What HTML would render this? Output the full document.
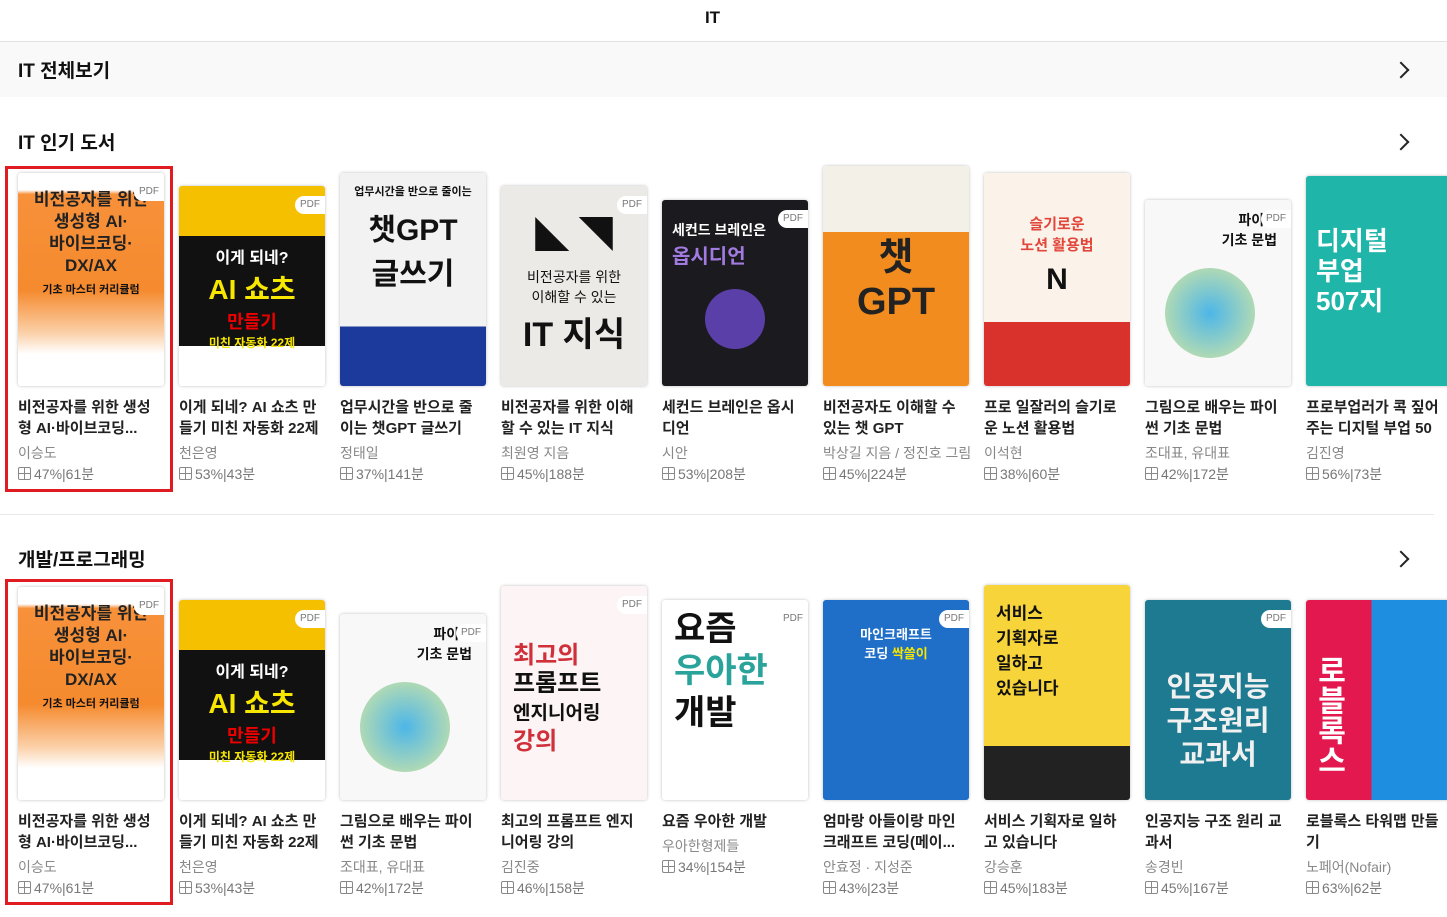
<!DOCTYPE html><html><head><meta charset="utf-8"><style>
body{margin:0;width:1447px;height:917px;overflow:hidden;background:#fff;font-family:"Liberation Sans","Noto Sans CJK KR",sans-serif;color:#111;position:relative}
.a{position:absolute}
.hd{top:0;left:0;width:1425px;height:41px;text-align:center;line-height:36px;font-size:17px;font-weight:bold}
.ln{top:41px;left:0;width:1447px;height:1px;background:#e2e2e2}
.band{top:42px;left:0;width:1447px;height:55px;background:#f9f9f9}
.h{font-size:19px;font-weight:bold;left:18px}
.chev{width:10px;height:10px;border-right:2px solid #222;border-top:2px solid #222;transform:rotate(45deg)}
.cv{width:146px;box-shadow:0 0 3px rgba(0,0,0,.25);border-radius:3px;overflow:hidden;font-weight:bold;text-align:center}
.pdf{position:absolute;right:0;top:10px;width:30px;height:18px;background:#fff;border-radius:9px 0 0 9px;font-size:10px;font-weight:normal;color:#777;line-height:18px}
.t{width:150px;font-size:15px;font-weight:bold;line-height:21px;color:#222;white-space:nowrap;overflow:hidden}
.au{font-size:14px;color:#888;width:155px;white-space:nowrap;overflow:hidden}
.st{font-size:14px;color:#777}
.st:before{content:"";display:inline-block;width:11px;height:11px;border:1px solid #888;border-radius:2px;margin-right:3px;vertical-align:-1px;background:linear-gradient(#888,#888) 5px 0/1px 100% no-repeat,linear-gradient(#888,#888) 0 5px/100% 1px no-repeat}
.red{border:3px solid #e01b22;left:5px;width:162px;height:320px}
</style></head><body>
<div class="a hd">IT</div>
<div class="a ln"></div>
<div class="a band"></div>
<div class="a h" style="top:56px">IT 전체보기</div>
<div class="a chev" style="left:1395px;top:64px"></div>
<div class="a h" style="top:128px">IT 인기 도서</div>
<div class="a chev" style="left:1395px;top:136px"></div>
<div class="a" style="left:0;top:514px;width:1434px;height:1px;background:#e8e8e8"></div>
<div class="a h" style="top:545px">개발/프로그래밍</div>
<div class="a chev" style="left:1395px;top:553px"></div>

<!-- row 1 -->
<div class="a cv" style="left:18px;top:173px;height:213px;background:linear-gradient(#fff 8%,#f7913a 10%,#f58a2e 55%,#fbd0a8 75%,#fff 85%)"><div style="font-size:17px;color:#222;margin-top:16px;line-height:22px">비전공자를 위한<br>생성형 AI·<br>바이브코딩·<br>DX/AX</div><div style="font-size:11px;margin-top:4px">기초 마스터 커리큘럼</div><div class="pdf">PDF</div></div>
<div class="a cv" style="left:179px;top:186px;height:200px;background:linear-gradient(#f5c000 0,#f5c000 25%,#111 25%,#111 80%,#fff 80%)"><div style="color:#fff;font-size:16px;margin-top:58px">이게 되네?</div><div style="color:#f7e600;font-size:28px">AI 쇼츠</div><div style="color:#e00;font-size:18px">만들기</div><div style="color:#f7e600;font-size:12px">미친 자동화 22제</div><div class="pdf">PDF</div></div>
<div class="a cv" style="left:340px;top:173px;height:213px;background:linear-gradient(#f2f2f2 72%,#1c3a9c 72%)"><div style="font-size:11px;margin-top:10px">업무시간을 반으로 줄이는</div><div style="font-size:30px;margin-top:6px">챗GPT</div><div style="font-size:30px">글쓰기</div></div>
<div class="a cv" style="left:501px;top:186px;height:200px;background:#eceae6"><div style="font-size:34px;margin-top:22px">◣ ◥</div><div style="font-size:14px;font-weight:normal;margin-top:10px">비전공자를 위한<br>이해할 수 있는</div><div style="font-size:34px">IT 지식</div><div class="pdf">PDF</div></div>
<div class="a cv" style="left:662px;top:200px;height:186px;background:#1a1a1f"><div style="color:#fff;font-size:14px;text-align:left;margin:20px 0 0 10px">세컨드 브레인은<br><span style="color:#a27be0;font-size:20px">옵시디언</span></div><div style="width:60px;height:60px;border-radius:30px;background:#5b3fa8;margin:20px auto"></div><div class="pdf">PDF</div></div>
<div class="a cv" style="left:823px;top:166px;height:220px;background:linear-gradient(#f3f0e8 30%,#f28c1e 30%)"><div style="font-size:38px;margin-top:60px;color:#222">챗<br>GPT</div></div>
<div class="a cv" style="left:984px;top:173px;height:213px;background:linear-gradient(#fbf2ea 70%,#d9322c 70%)"><div style="font-size:15px;color:#e2473b;margin-top:40px">슬기로운<br>노션 활용법</div><div style="font-size:30px;margin-top:8px">N</div></div>
<div class="a cv" style="left:1145px;top:200px;height:186px;background:#f8f8f8"><div style="font-size:14px;text-align:right;margin:10px 14px 0 0">파이썬<br>기초 문법</div><div style="width:90px;height:90px;border-radius:45px;background:radial-gradient(#4db6e8,#d8e8a0);margin:18px 0 0 20px"></div><div class="pdf">PDF</div></div>
<div class="a cv" style="left:1306px;top:176px;height:210px;background:#1fb5a8"><div style="color:#fff;font-size:26px;margin-top:50px;line-height:30px;text-align:left;padding-left:10px">디지털<br>부업<br>507지</div></div>

<div class="a t" style="left:18px;top:397px">비전공자를 위한 생성<br>형 AI·바이브코딩...</div><div class="a au" style="left:18px;top:443px">이승도</div><div class="a st" style="left:18px;top:464px">47%|61분</div>
<div class="a t" style="left:179px;top:397px">이게 되네? AI 쇼츠 만<br>들기 미친 자동화 22제</div><div class="a au" style="left:179px;top:443px">천은영</div><div class="a st" style="left:179px;top:464px">53%|43분</div>
<div class="a t" style="left:340px;top:397px">업무시간을 반으로 줄<br>이는 챗GPT 글쓰기</div><div class="a au" style="left:340px;top:443px">정태일</div><div class="a st" style="left:340px;top:464px">37%|141분</div>
<div class="a t" style="left:501px;top:397px">비전공자를 위한 이해<br>할 수 있는 IT 지식</div><div class="a au" style="left:501px;top:443px">최원영 지음</div><div class="a st" style="left:501px;top:464px">45%|188분</div>
<div class="a t" style="left:662px;top:397px">세컨드 브레인은 옵시<br>디언</div><div class="a au" style="left:662px;top:443px">시안</div><div class="a st" style="left:662px;top:464px">53%|208분</div>
<div class="a t" style="left:823px;top:397px">비전공자도 이해할 수<br>있는 챗 GPT</div><div class="a au" style="left:823px;top:443px">박상길 지음 / 정진호 그림</div><div class="a st" style="left:823px;top:464px">45%|224분</div>
<div class="a t" style="left:984px;top:397px">프로 일잘러의 슬기로<br>운 노션 활용법</div><div class="a au" style="left:984px;top:443px">이석현</div><div class="a st" style="left:984px;top:464px">38%|60분</div>
<div class="a t" style="left:1145px;top:397px">그림으로 배우는 파이<br>썬 기초 문법</div><div class="a au" style="left:1145px;top:443px">조대표, 유대표</div><div class="a st" style="left:1145px;top:464px">42%|172분</div>
<div class="a t" style="left:1306px;top:397px">프로부업러가 콕 짚어<br>주는 디지털 부업 50</div><div class="a au" style="left:1306px;top:443px">김진영</div><div class="a st" style="left:1306px;top:464px">56%|73분</div>

<!-- row 2 -->
<div class="a cv" style="left:18px;top:587px;height:213px;background:linear-gradient(#fff 8%,#f7913a 10%,#f58a2e 55%,#fbd0a8 75%,#fff 85%)"><div style="font-size:17px;color:#222;margin-top:16px;line-height:22px">비전공자를 위한<br>생성형 AI·<br>바이브코딩·<br>DX/AX</div><div style="font-size:11px;margin-top:4px">기초 마스터 커리큘럼</div><div class="pdf">PDF</div></div>
<div class="a cv" style="left:179px;top:600px;height:200px;background:linear-gradient(#f5c000 0,#f5c000 25%,#111 25%,#111 80%,#fff 80%)"><div style="color:#fff;font-size:16px;margin-top:58px">이게 되네?</div><div style="color:#f7e600;font-size:28px">AI 쇼츠</div><div style="color:#e00;font-size:18px">만들기</div><div style="color:#f7e600;font-size:12px">미친 자동화 22제</div><div class="pdf">PDF</div></div>
<div class="a cv" style="left:340px;top:614px;height:186px;background:#f8f8f8"><div style="font-size:14px;text-align:right;margin:10px 14px 0 0">파이썬<br>기초 문법</div><div style="width:90px;height:90px;border-radius:45px;background:radial-gradient(#4db6e8,#d8e8a0);margin:18px 0 0 20px"></div><div class="pdf">PDF</div></div>
<div class="a cv" style="left:501px;top:586px;height:214px;background:#fdf5f5"><div style="font-size:24px;text-align:left;padding-left:12px;margin-top:56px;line-height:28px"><span style="color:#d0303a">최고의</span><br>프롬프트<br><span style="font-size:19px">엔지니어링</span><br><span style="color:#d0303a">강의</span></div><div class="pdf">PDF</div></div>
<div class="a cv" style="left:662px;top:600px;height:200px;background:#fff"><div style="font-size:34px;text-align:left;padding-left:12px;margin-top:8px;line-height:42px">요즘<br><span style="color:#2aa39a">우아한</span><br>개발</div><div class="pdf">PDF</div></div>
<div class="a cv" style="left:823px;top:600px;height:200px;background:#1f6fc8"><div style="color:#fff;font-size:13px;margin-top:24px">마인크래프트<br>코딩 <span style="color:#f7e600">싹쓸이</span></div><div class="pdf">PDF</div></div>
<div class="a cv" style="left:984px;top:585px;height:215px;background:linear-gradient(#f7d43a 75%,#222 75%)"><div style="font-size:17px;text-align:left;padding-left:12px;margin-top:14px">서비스<br>기획자로<br>일하고<br>있습니다</div></div>
<div class="a cv" style="left:1145px;top:600px;height:200px;background:#1d7a90"><div style="color:#f0f0f0;font-size:28px;margin-top:70px;line-height:34px">인공지능<br>구조원리<br>교과서</div><div class="pdf">PDF</div></div>
<div class="a cv" style="left:1306px;top:600px;height:200px;background:linear-gradient(90deg,#e3184e 45%,#1e8fe0 45%)"><div style="color:#fff;font-size:30px;margin-top:40px;writing-mode:vertical-rl;height:150px">로블록스</div></div>

<div class="a t" style="left:18px;top:811px">비전공자를 위한 생성<br>형 AI·바이브코딩...</div><div class="a au" style="left:18px;top:857px">이승도</div><div class="a st" style="left:18px;top:878px">47%|61분</div>
<div class="a t" style="left:179px;top:811px">이게 되네? AI 쇼츠 만<br>들기 미친 자동화 22제</div><div class="a au" style="left:179px;top:857px">천은영</div><div class="a st" style="left:179px;top:878px">53%|43분</div>
<div class="a t" style="left:340px;top:811px">그림으로 배우는 파이<br>썬 기초 문법</div><div class="a au" style="left:340px;top:857px">조대표, 유대표</div><div class="a st" style="left:340px;top:878px">42%|172분</div>
<div class="a t" style="left:501px;top:811px">최고의 프롬프트 엔지<br>니어링 강의</div><div class="a au" style="left:501px;top:857px">김진중</div><div class="a st" style="left:501px;top:878px">46%|158분</div>
<div class="a t" style="left:662px;top:811px">요즘 우아한 개발</div><div class="a au" style="left:662px;top:836px">우아한형제들</div><div class="a st" style="left:662px;top:857px">34%|154분</div>
<div class="a t" style="left:823px;top:811px">엄마랑 아들이랑 마인<br>크래프트 코딩(메이...</div><div class="a au" style="left:823px;top:857px">안효정 · 지성준</div><div class="a st" style="left:823px;top:878px">43%|23분</div>
<div class="a t" style="left:984px;top:811px">서비스 기획자로 일하<br>고 있습니다</div><div class="a au" style="left:984px;top:857px">강승훈</div><div class="a st" style="left:984px;top:878px">45%|183분</div>
<div class="a t" style="left:1145px;top:811px">인공지능 구조 원리 교<br>과서</div><div class="a au" style="left:1145px;top:857px">송경빈</div><div class="a st" style="left:1145px;top:878px">45%|167분</div>
<div class="a t" style="left:1306px;top:811px">로블록스 타워맵 만들<br>기</div><div class="a au" style="left:1306px;top:857px">노페어(Nofair)</div><div class="a st" style="left:1306px;top:878px">63%|62분</div>

<div class="a red" style="top:166px"></div>
<div class="a red" style="top:579px"></div>
</body></html>
